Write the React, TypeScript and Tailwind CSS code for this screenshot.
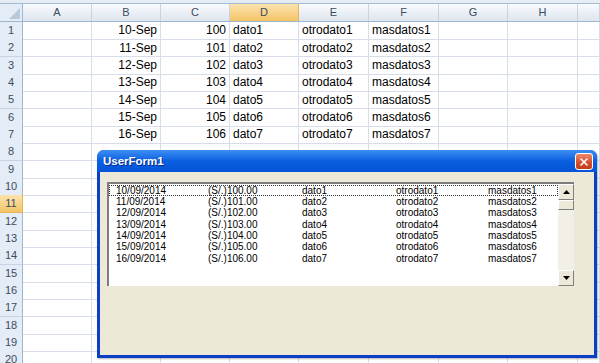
import React from 'react';
import { X } from 'lucide-react';

const COLS = ['A', 'B', 'C', 'D', 'E', 'F', 'G', 'H', ''];
const GRID = 'grid grid-cols-[23px_69px_69px_69px_69px_70px_70px_69px_70px_1fr]';

const sheetRows = Array.from({ length: 20 }, (_, i) =>
  i < 7
    ? ['', `${10 + i}-Sep`, String(100 + i), `dato${i + 1}`, `otrodato${i + 1}`, `masdatos${i + 1}`, '', '', '']
    : ['', '', '', '', '', '', '', '', '']
);

const listRows = Array.from({ length: 7 }, (_, i) => [
  `${10 + i}/09/2014`,
  `(S/.)${100 + i}.00`,
  `dato${i + 1}`,
  `otrodato${i + 1}`,
  `masdatos${i + 1}`,
]);

const Arrow = ({ up }: { up?: boolean }) => (
  <svg width="7" height="4" viewBox="0 0 7 4">
    <polygon points={up ? '0,4 7,4 3.5,0' : '0,0 7,0 3.5,4'} fill="#000" />
  </svg>
);

const ScrollBtn = ({ children, h = 'h-[16px]' }: { children?: React.ReactNode; h?: string }) => (
  <div className={`${h} w-full bg-[#ece9d8] border border-t-white border-l-white border-r-[#808080] border-b-[#808080] flex items-center justify-center`}>
    {children}
  </div>
);

const UserForm = () => (
  <div className="absolute left-[97px] top-[150px] w-[500px] h-[208px] flex flex-col rounded-t-[7px] overflow-hidden bg-[#0b3fc4] shadow-[1px_1px_2px_rgba(0,0,0,0.3)]">
    <div className="h-[22px] flex items-start justify-between pl-[6px] pr-[4px] pt-[3px] bg-gradient-to-b from-[#3d8ff5] via-[#0a5fe0] to-[#0654d8]">
      <span className="text-white font-bold text-[11.5px] leading-[16px] font-['Liberation_Sans',sans-serif] [text-shadow:1px_1px_0_#0a2a8a]">
        UserForm1
      </span>
      <div className="w-[18px] h-[17px] rounded-[3px] border border-white bg-gradient-to-b from-[#ea8a6c] via-[#d9532f] to-[#c23b1a] flex items-center justify-center">
        <X size={12} strokeWidth={3.2} color="#fff" />
      </div>
    </div>
    <div className="flex-1 mx-[3px] mb-[3px] bg-[#ece9d8] pl-[7px] pt-[10px]">
      <div className="w-[467px] h-[104px] flex border-t-2 border-l-2 border-t-[#7d7d7d] border-l-[#7d7d7d] bg-white">
        <div className="flex-1 pt-[1px] text-[10px] text-black font-['Liberation_Sans',sans-serif]">
          {listRows.map((r, i) => (
            <div
              key={i}
              className={`${i % 3 === 2 ? 'h-[12px]' : 'h-[11px]'} leading-[11px] grid grid-cols-[92px_94px_94px_92px_1fr] pl-[7px] ${
                i === 0 ? 'outline outline-1 outline-dotted -outline-offset-1 outline-[#333]' : ''
              }`}
            >
              {r.map((c, j) => (
                <span key={j} className="whitespace-nowrap">{c}</span>
              ))}
            </div>
          ))}
        </div>
        <div className="w-[16px] flex flex-col bg-[#f1efe6]">
          <ScrollBtn>
            <Arrow up />
          </ScrollBtn>
          <ScrollBtn h="h-[10px]" />
          <div className="flex-1" />
          <ScrollBtn>
            <Arrow />
          </ScrollBtn>
        </div>
      </div>
    </div>
  </div>
);

export default function App() {
  return (
    <div className="relative w-[600px] h-[363px] overflow-hidden bg-white font-['Liberation_Sans',sans-serif]">
      <div className="h-[4px] bg-[#e6ecf4] border-b border-[#a7bad3]" />
      <div className={`${GRID} h-[18px] border-b border-[#9eb6ce]`}>
        <div className="bg-[#e4ecf7] border-r border-[#9eb6ce] flex items-end justify-end p-[2px]">
          <svg width="11" height="11" viewBox="0 0 11 11">
            <polygon points="11,0 11,11 0,11" fill="#b9c9dc" />
          </svg>
        </div>
        {COLS.map((c, i) => (
          <div
            key={i}
            className={`flex items-center justify-center text-[11px] text-[#3b4c60] border-r ${
              c === 'D'
                ? 'bg-gradient-to-b from-[#fbe3ae] to-[#f3c465] border-[#e9b55a]'
                : 'bg-gradient-to-b from-[#f9fbfd] to-[#dde5ef] border-[#c8d4e3]'
            }`}
          >
            {c}
          </div>
        ))}
      </div>
      {sheetRows.map((row, i) => (
        <div key={i} className={`${GRID} ${i % 3 === 1 ? 'h-[18px]' : 'h-[17px]'}`}>
          <div
            className={`flex items-center justify-center text-[11px] text-[#3b4c60] border-r border-b ${
              i === 10
                ? 'bg-gradient-to-b from-[#fbe3ae] to-[#f3c465] border-r-[#e9b55a] border-b-[#e9b55a]'
                : 'bg-[#e4ecf7] border-r-[#9eb6ce] border-b-[#c5d3e3]'
            }`}
          >
            {i + 1}
          </div>
          {row.map((v, j) => (
            <div
              key={j}
              className={`flex items-center border-r border-b border-[#d8dee9] text-[12px] text-black whitespace-nowrap overflow-hidden ${
                j === 1 || j === 2 ? 'justify-end pr-[3px]' : 'pl-[3px]'
              }`}
            >
              {v}
            </div>
          ))}
        </div>
      ))}
      <UserForm />
    </div>
  );
}
